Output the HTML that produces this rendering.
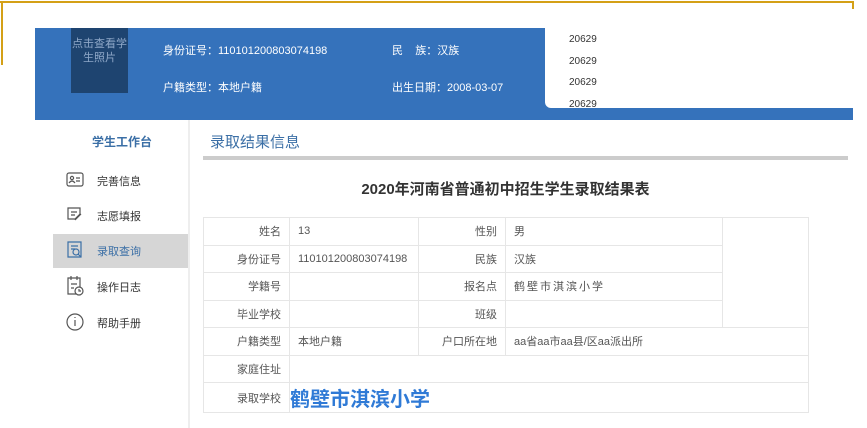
<!DOCTYPE html><html><head><meta charset="utf-8"><style>
*{margin:0;padding:0;box-sizing:border-box}
body{width:867px;height:428px;background:#fff;position:relative;overflow:hidden;font-family:"Liberation Sans","Noto Sans CJK SC",sans-serif;font-size:11px;color:#333}
.a{position:absolute}
.hd{left:35px;top:28px;width:818px;height:92px;background:#3572bb}
.ht{color:#fff;font-size:11px;position:absolute}
td{border:1px solid #e6e6e6;height:27.5px;font-size:11px;color:#555;padding:0 8px}
td.l{text-align:right;width:86px}
.mi{position:absolute;left:97px;font-size:11px;color:#333}
</style></head><body>
<div class="a" style="left:0;top:1px;width:854px;height:2px;background:#d4a017"></div>
<div class="a" style="left:852px;top:1px;width:2px;height:8px;background:#d4a017"></div>
<div class="a" style="left:1px;top:1px;width:2px;height:64px;background:#d4a017"></div>
<div class="a hd">
<div class="a" style="left:36px;top:0;width:57px;height:65px;background:#1e4470;color:#8fa8c8;font-size:11px;text-align:center;line-height:14px;padding-top:9px">点击查看学<br>生照片</div>
<div class="ht" style="left:128px;top:14px">身份证号：110101200803074198</div>
<div class="ht" style="left:357px;top:14px">民&nbsp;&nbsp;&nbsp;&nbsp;族：汉族</div>
<div class="ht" style="left:128px;top:51px">户籍类型：本地户籍</div>
<div class="ht" style="left:357px;top:51px">出生日期：2008-03-07</div>
<div class="a" style="left:510px;top:0;width:308px;height:80px;background:#fff;border-bottom-left-radius:6px;font-size:10px;color:#333;line-height:21.5px;padding:1px 0 0 24px">20629<br>20629<br>20629<br>20629</div>
</div>
<div class="a" style="left:188px;top:120px;width:2px;height:308px;background:#eee"></div>
<div class="a" style="left:92px;top:133px;color:#3b6fa6;font-size:12px;font-weight:bold">学生工作台</div>
<div class="a" style="left:53px;top:234px;width:135px;height:34px;background:#d6d6d6"></div>
<svg class="a" style="left:64px;top:170px" width="22" height="170" fill="none" stroke="#555" stroke-width="1.2">
<rect x="3" y="3" width="16" height="13" rx="2"/><circle cx="8" cy="8" r="1.6"/><path d="M5 13q3-4 6 0M12 8h4M12 11h4"/>
<path d="M4 38h12v6l-5 5H4z" /><path d="M7 42h6M7 45h4M11 50l6-6"/>
<g stroke="#3b6fa6"><path d="M4 72h13v15H4zM7 76h7M7 79h4"/><circle cx="12" cy="82" r="3"/><path d="M14 84l3 3"/></g>
<path d="M4 108h12v16H4zM7 106v4M13 106v4M7 114h6M7 118h3"/><circle cx="15" cy="121" r="4" fill="#fff"/><path d="M15 119v2h2"/>
<circle cx="11" cy="152" r="8"/><path d="M11 150v6M11 147v1"/>
</svg>
<div class="mi" style="top:173px">完善信息</div>
<div class="mi" style="top:208px">志愿填报</div>
<div class="mi" style="top:243px;color:#3b6fa6">录取查询</div>
<div class="mi" style="top:279px">操作日志</div>
<div class="mi" style="top:315px">帮助手册</div>
<div class="a" style="left:210px;top:131px;color:#3b6fa6;font-size:15px">录取结果信息</div>
<div class="a" style="left:203px;top:156px;width:645px;height:4px;background:#ccc"></div>
<div class="a" style="left:203px;top:178px;width:605px;text-align:center;font-size:15px;font-weight:bold;color:#333">2020年河南省普通初中招生学生录取结果表</div>
<table class="a" style="left:203px;top:217px;width:606px;border-collapse:collapse">
<tr><td class="l">姓名</td><td style="width:129px">13</td><td class="l" style="width:87px">性别</td><td style="width:217px">男</td><td rowspan="4"></td></tr>
<tr><td class="l">身份证号</td><td>110101200803074198</td><td class="l">民族</td><td>汉族</td></tr>
<tr><td class="l">学籍号</td><td></td><td class="l">报名点</td><td style="letter-spacing:2px">鹤壁市淇滨小学</td></tr>
<tr><td class="l">毕业学校</td><td></td><td class="l">班级</td><td></td></tr>
<tr><td class="l">户籍类型</td><td>本地户籍</td><td class="l">户口所在地</td><td colspan="2">aa省aa市aa县/区aa派出所</td></tr>
<tr><td class="l">家庭住址</td><td colspan="4"></td></tr>
<tr><td class="l">录取学校</td><td colspan="4" style="padding-left:0;color:#2f7ad6;font-size:20px;font-weight:bold">鹤壁市淇滨小学</td></tr>
</table>
</body></html>
